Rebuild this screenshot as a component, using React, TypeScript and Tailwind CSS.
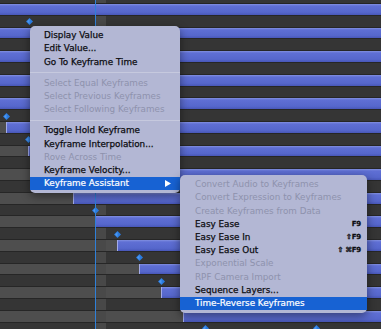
import React from "react";

type Pair = { barPad: string; barEdge: boolean; diamonds: number[] };

const pairs: Pair[] = [
  { barPad: "w-0", barEdge: false, diamonds: [29] },
  { barPad: "w-0", barEdge: false, diamonds: [] },
  { barPad: "w-0", barEdge: false, diamonds: [] },
  { barPad: "w-0", barEdge: false, diamonds: [] },
  { barPad: "w-0", barEdge: false, diamonds: [6] },
  { barPad: "w-[6px]", barEdge: true, diamonds: [28] },
  { barPad: "w-[28px]", barEdge: true, diamonds: [50] },
  { barPad: "w-[50px]", barEdge: true, diamonds: [73] },
  { barPad: "w-[73px]", barEdge: true, diamonds: [95] },
  { barPad: "w-[95px]", barEdge: true, diamonds: [117] },
  { barPad: "w-[117px]", barEdge: true, diamonds: [139] },
  { barPad: "w-[139px]", barEdge: true, diamonds: [161] },
  { barPad: "w-[161px]", barEdge: true, diamonds: [183] },
  { barPad: "w-[183px]", barEdge: true, diamonds: [205, 316] },
];

function Diamond({ x }: { x: number }) {
  return (
    <svg
      className="absolute top-[2.5px]"
      style={{ left: x - 3.5 }}
      width="7"
      height="7"
      viewBox="0 0 7 7"
    >
      <polygon points="3.5,0 7,3.5 3.5,7 0,3.5" fill="#2a7be0" />
      <polygon points="3.5,1 3.5,6 1,3.5" fill="#4f98ee" />
    </svg>
  );
}

const darkRowBg =
  "bg-[linear-gradient(to_right,#353535_96px,#484848_96px,#484848_106px,#353535_106px)]";
const grayBg =
  "bg-[linear-gradient(to_right,#4e4e4e_96px,#494949_96px,#494949_106px,#4e4e4e_106px)]";

type Item = {
  label: string;
  disabled?: boolean;
  active?: boolean;
  arrow?: boolean;
  shortcut?: string;
  sep?: boolean;
};

const mainItems: Item[] = [
  { label: "Display Value" },
  { label: "Edit Value..." },
  { label: "Go To Keyframe Time" },
  { label: "", sep: true },
  { label: "Select Equal Keyframes", disabled: true },
  { label: "Select Previous Keyframes", disabled: true },
  { label: "Select Following Keyframes", disabled: true },
  { label: "", sep: true },
  { label: "Toggle Hold Keyframe" },
  { label: "Keyframe Interpolation..." },
  { label: "Rove Across Time", disabled: true },
  { label: "Keyframe Velocity..." },
  { label: "Keyframe Assistant", active: true, arrow: true },
];

const subItems: Item[] = [
  { label: "Convert Audio to Keyframes", disabled: true },
  { label: "Convert Expression to Keyframes", disabled: true },
  { label: "Create Keyframes from Data", disabled: true },
  { label: "Easy Ease", shortcut: "F9" },
  { label: "Easy Ease In", shortcut: "⇧F9" },
  { label: "Easy Ease Out", shortcut: "⇧ ⌘F9" },
  { label: "Exponential Scale", disabled: true },
  { label: "RPF Camera Import", disabled: true },
  { label: "Sequence Layers..." },
  { label: "Time-Reverse Keyframes", active: true },
];

function MenuRow({ item, pl }: { item: Item; pl: string }) {
  if (item.sep) {
    return (
      <div className="h-[8px] flex items-center">
        <div className="h-px w-full bg-[#c6c9de]" />
      </div>
    );
  }
  const color = item.active
    ? "text-white bg-[#1762d3] [-webkit-text-stroke:0.2px_#ffffff]"
    : item.disabled
    ? "text-[#8e92ad]"
    : "text-[#0c0c10] [-webkit-text-stroke:0.25px_#0c0c10]";
  return (
    <div
      className={`h-[13.2px] flex items-center justify-between ${pl} pr-[6px] whitespace-nowrap ${color}`}
    >
      <span className="leading-none">{item.label}</span>
      {item.arrow && (
        <svg width="6" height="7" viewBox="0 0 6 7" className="mr-[3px]">
          <polygon points="0,0 6,3.5 0,7" fill="#ffffff" />
        </svg>
      )}
      {item.shortcut && (
        <span className="leading-none text-[7px] font-bold tracking-[-0.2px]">
          {item.shortcut}
        </span>
      )}
    </div>
  );
}

export default function App() {
  return (
    <div
      className="relative w-[381px] h-[329px] overflow-hidden bg-[#333333]"
      style={{ fontFamily: '"DejaVu Sans", "Liberation Sans", sans-serif' }}
    >
      <div className="flex flex-col">
        <div className={`h-[4px] border-b border-[#242424] ${darkRowBg}`} />
        {pairs.map((p, i) => (
          <React.Fragment key={i}>
            <div className="h-[11.8px] flex border-b border-[#262626]">
              <div className={`${p.barPad} shrink-0 ${grayBg}`} />
              <div
                className={`flex-1 bg-[linear-gradient(to_bottom,#8290e0,#5f6fd4_18%,#5667cc_75%,#4857b8)] ${
                  p.barEdge ? "border-l border-[#a3abe8]" : ""
                }`}
              />
            </div>
            <div
              className={`relative h-[11.8px] border-b border-[#262626] ${darkRowBg}`}
            >
              {p.diamonds.map((d) => (
                <Diamond key={d} x={d} />
              ))}
            </div>
          </React.Fragment>
        ))}
      </div>

      <div className="absolute left-[95px] top-0 h-full w-px bg-[#2f80d8]" />

      <div className="absolute left-[30px] top-[26px] w-[150px] rounded-[5px] bg-[#b3b7d4] py-[3px] text-[8.8px] shadow-[0_3px_10px_rgba(0,0,0,0.45)]">
        {mainItems.map((it, i) => (
          <MenuRow key={i} item={it} pl="pl-[14px]" />
        ))}
      </div>

      <div className="absolute left-[180px] top-[175px] w-[187px] rounded-[5px] bg-[#b3b7d4] py-[3px] text-[8.8px] shadow-[0_3px_10px_rgba(0,0,0,0.45)]">
        {subItems.map((it, i) => (
          <MenuRow key={i} item={it} pl="pl-[15px]" />
        ))}
      </div>
    </div>
  );
}
